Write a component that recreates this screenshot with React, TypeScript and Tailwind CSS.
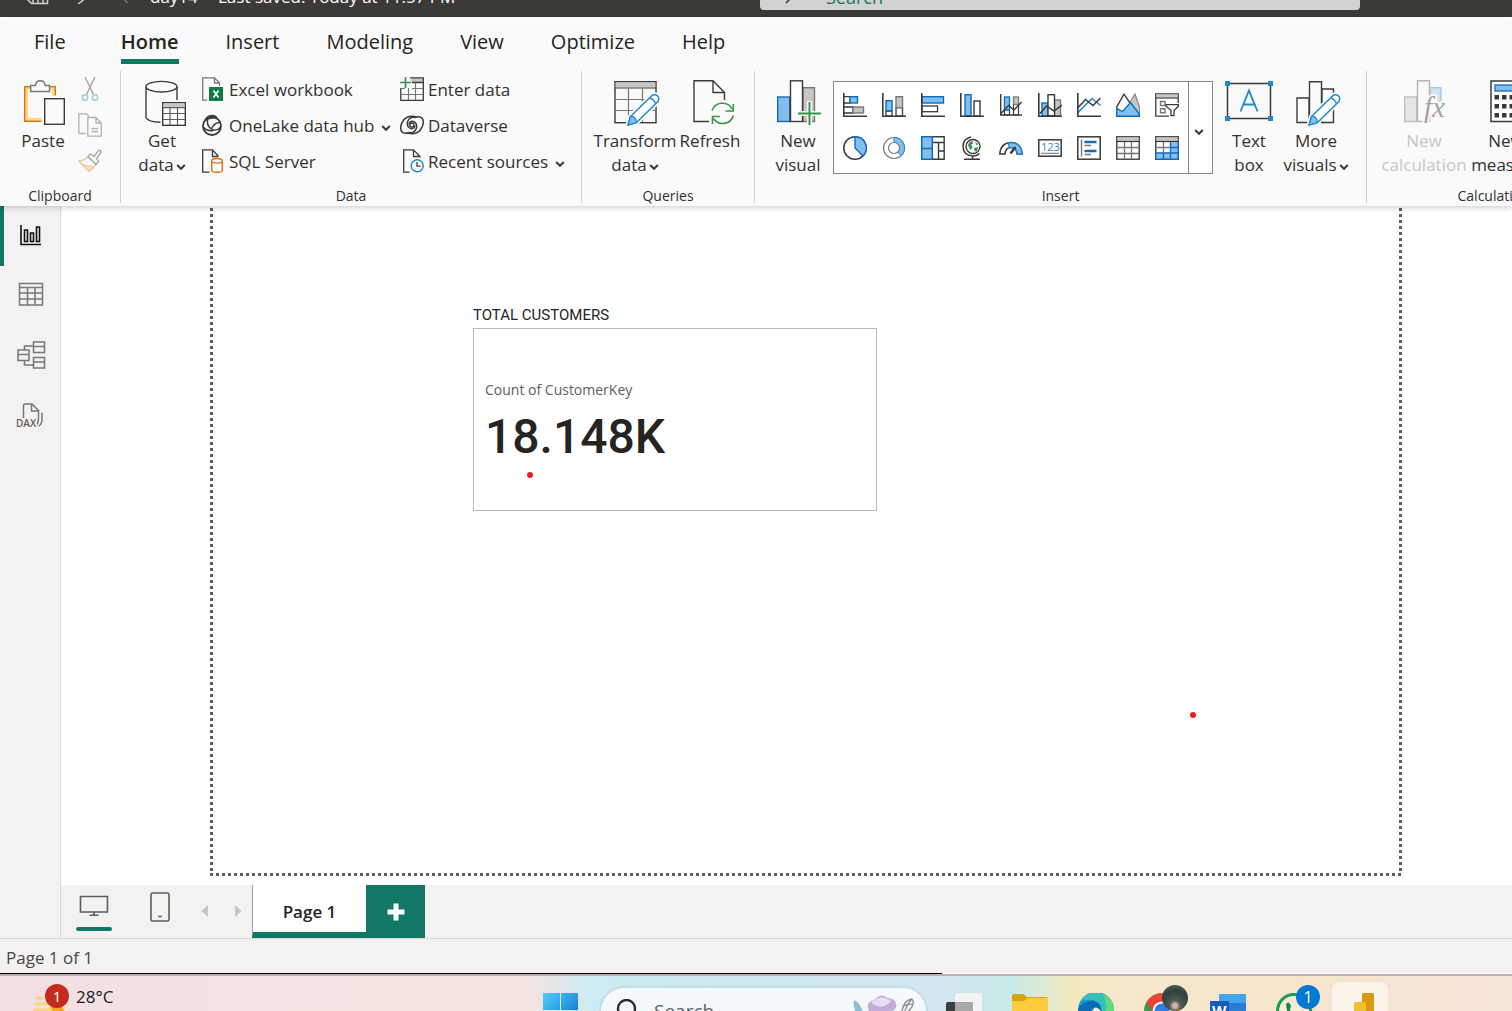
import type { ReactNode } from "react";

const INK = "#3b3a39";
const BLUE = "#83beec";
const EDGE = "#0f6cbd";
const GREY = "#c8c6c4";

type Drawing = { w: number; h: number; children: ReactNode; className?: string };

function Svg({ w, h, children, className }: Drawing) {
  return (
    <svg width={w} height={h} viewBox={`0 0 ${w} ${h}`} fill="none" aria-hidden="true" className={className ?? "shrink-0"}>
      {children}
    </svg>
  );
}

function Chevron({ className }: { className?: string }) {
  return (
    <Svg w={10} h={8} className={className ?? "shrink-0"}>
      <path d="M1.2 2 L5 5.8 L8.8 2" stroke={INK} strokeWidth="2" />
    </Svg>
  );
}

function Pencil() {
  return (
    <g>
      <path d="M17.5 36.5 L38.5 16 a4.2 4.2 0 0 1 6 6 L23.5 42.5 L15 45 Z" fill="#fff" stroke="#fafafa" strokeWidth="5" />
      <path d="M17.5 36.5 L38.5 16 a4.2 4.2 0 0 1 6 6 L23.5 42.5 L15 45 Z" fill="#fff" stroke="#1e8bcd" strokeWidth="1.5" strokeLinejoin="round" />
      <path d="M17.5 36.5 Q23 36 23.5 42.5 L15 45 Z" fill={BLUE} stroke="#1e8bcd" strokeWidth="1.3" />
      <path d="M36.5 18 Q41 19 42.5 24" stroke="#1e8bcd" strokeWidth="1.3" />
    </g>
  );
}

/* ---------- large ribbon icons ---------- */

const PasteIcon = () => (
  <Svg w={44} h={46} className="ml-1 shrink-0">
    <rect x="3.2" y="8.2" width="27.6" height="31.6" fill="#fafafa" stroke="#fbd98d" strokeWidth="4" />
    <rect x="1.7" y="6.7" width="30.6" height="34.6" stroke="#e0730d" strokeWidth="1.4" />
    <rect x="18.5" y="15.5" width="26" height="31" fill="#fafafa" />
    <path d="M7.7 11.5 V5.5 H12.5 Q13 .8 17.3 .8 Q21.500 .8 22 5.5 H26.500 V11.500 Z" fill="#fafafa" stroke="#797775" strokeWidth="1.4" />
    <rect x="21.7" y="18.7" width="19.600" height="25.600" fill="#fafafa" stroke={INK} strokeWidth="1.4" />
  </Svg>
);

const GetDataIcon = () => (
  <Svg w={44} h={46} className="ml-2 shrink-0">
    <path d="M2 7 V37.500 Q4 42 16.500 42.300 M33 7 V20" stroke={INK} strokeWidth="1.4" />
    <ellipse cx="17.5" cy="6.700" rx="15.500" ry="5.300" stroke={INK} strokeWidth="1.4" />
    <rect x="18.700" y="22.700" width="22.600" height="22.600" fill="#fff" stroke={INK} strokeWidth="1.4" />
    <rect x="19.400" y="23.400" width="21.200" height="3.600" fill={GREY} />
    <path d="M19 27.700 H41 M19 33.500 H41 M19 39.500 H41 M26 28 V45 M33.500 28 V45" stroke="#605e5c" strokeWidth="1.200" />
  </Svg>
);

const TransformIcon = () => (
  <Svg w={48} h={46} className="ml-1 shrink-0">
    <rect x="2" y="1.700" width="41" height="41" fill="#fafafa" stroke={INK} strokeWidth="1.400" />
    <rect x="2.700" y="2.400" width="39.600" height="5" fill={GREY} />
    <path d="M2 8 H43" stroke={INK} strokeWidth="1.200" />
    <path d="M2.700 19.500 H42 M2.700 30.500 H42 M15.500 8.500 V42 M29.500 8.500 V42" stroke="#797775" strokeWidth="1.200" />
    <Pencil />
  </Svg>
);

const RefreshIcon = () => (
  <Svg w={44} h={46} className="ml-[6px] shrink-0">
    <path d="M18 41.500 H3 V.8 H22 L33.500 12.500 V20 M22 .8 V12.500 H33.500" stroke={INK} strokeWidth="1.400" />
    <path d="M21 30.500 A11 11 0 0 1 41 29 M42.300 24 V31 H34.500 M42.300 35.500 A11 11 0 0 1 22.500 38.500 M21.500 44 V36.500 H29" stroke="#35964a" strokeWidth="1.600" />
  </Svg>
);

const NewVisualIcon = () => (
  <Svg w={46} h={46}>
    <rect x="2.700" y="17" width="12" height="24.500" fill={BLUE} stroke={EDGE} strokeWidth="1.400" />
    <rect x="28" y="7.700" width="11.500" height="33.800" fill={GREY} stroke="#797775" strokeWidth="1.400" />
    <rect x="15.500" y=".8" width="12" height="40.700" fill="#fff" stroke={INK} strokeWidth="1.400" />
    <path d="M34.500 21 V46 M22 33.500 H46" stroke="#fafafa" strokeWidth="5" />
    <path d="M34.500 22 V45 M23 33.500 H46" stroke="#35964a" strokeWidth="2" />
  </Svg>
);

const TextBoxIcon = () => (
  <Svg w={48} h={46}>
    <rect x="2.500" y="3.500" width="43" height="35" stroke={INK} strokeWidth="1.500" />
    <path d="M0 1h5v5H0z M43 1h5v5h-5z M0 36h5v5H0z M43 36h5v5h-5z" fill="#1e8bcd" />
    <path d="M15.500 31.500 L24 10.500 L32.500 31.500 M18.500 24.500 H29.500" stroke="#1e8bcd" strokeWidth="1.800" />
  </Svg>
);

const MoreVisualsIcon = () => (
  <Svg w={48} h={46} className="ml-1 shrink-0">
    <path d="M3 18 H15 V42.500 H3 Z M15.500 1.700 H27.500 V42.500 H15.500 Z M28 9 H39.500 V42.500 H28 Z" stroke={INK} strokeWidth="1.400" />
    <Pencil />
  </Svg>
);

const NewCalculationIcon = () => (
  <Svg w={44} h={46}>
    <rect x="2.700" y="17" width="12" height="24.500" fill="#e6e5e4" stroke="#c0bebc" strokeWidth="1.400" />
    <rect x="28" y="7.700" width="11" height="14" fill="#cbe3f6" stroke="#a3cbe9" strokeWidth="1.400" />
    <rect x="15.500" y=".8" width="12" height="40.700" fill="#fafafa" stroke="#b5b3b1" strokeWidth="1.400" />
    <text x="22" y="37" fontFamily="Liberation Serif, serif" fontStyle="italic" fontSize="29" stroke="#fafafa" strokeWidth="4">fx</text>
    <text x="22" y="37" fontFamily="Liberation Serif, serif" fontStyle="italic" fontSize="29" fill="#a6a4a2">fx</text>
  </Svg>
);

const NewMeasureIcon = () => (
  <Svg w={36} h={46} className="ml-1 shrink-0">
    <rect x="1" y="1" width="34" height="40.500" fill="#fff" stroke={INK} strokeWidth="1.500" />
    <rect x="5" y="5" width="26" height="6" fill={BLUE} stroke={EDGE} strokeWidth="1.300" />
    {[15, 24, 33].map((y) => (
      <path key={y} d={`M4.500 ${y}h4.500v4.500h-4.500z M12 ${y}h4.500v4.500h-4.500z M19.500 ${y}h4.500v4.500h-4.500z M27 ${y}h4.500v4.500h-4.500z`} fill={INK} />
    ))}
  </Svg>
);

/* ---------- small ribbon icons ---------- */

const CutIcon = () => (
  <Svg w={24} h={24}>
    <path d="M7 0 L15.500 17.500 M17 0 L8.500 17.500" stroke="#a19f9d" strokeWidth="1.300" />
    <circle cx="7" cy="20.500" r="2.700" stroke="#9ccbe6" strokeWidth="1.500" />
    <circle cx="17" cy="20.500" r="2.700" stroke="#9ccbe6" strokeWidth="1.500" />
  </Svg>
);

const CopyIcon = () => (
  <Svg w={24} h={24}>
    <path d="M8 20.500 H.8 V.8 H8.500 L11 3.500 M18 4.500 H9.800 V23.200 H23.300 V10 L18 4.500 V10 H23.300 M13.500 15.500 H20 M13.500 18.500 H20" stroke="#b3b1af" strokeWidth="1.300" />
  </Svg>
);

const BrushIcon = () => (
  <Svg w={24} h={24}>
    <path d="M1 12 Q7 11.500 10 7.500 L18 15.500 Q15 20 11 22.500 Z" fill="#fafafa" stroke="#efc49c" strokeWidth="1.300" />
    <path d="M5 16 L15.500 17.500 L11 22 Z" fill="#fbe3b4" stroke="#efc49c" strokeWidth="1" />
    <path d="M10 7.500 L12.500 5 L16 7.500 L20.500 1.500 Q22.500 .5 23.200 3 L18.500 9.500 L20.500 12.500 L18 15.500 Z" fill="#fafafa" stroke="#a8a6a4" strokeWidth="1.300" />
  </Svg>
);

const ExcelIcon = () => (
  <Svg w={24} h={24}>
    <path d="M6 23.200 H1.700 V.8 H13.500 L18.500 6 V9 M13.500 .8 V6 H18.500" stroke="#797775" strokeWidth="1.300" />
    <rect x="8" y="10" width="14" height="14" fill="#107c41" />
    <path d="M12.500 13.500 L17.500 20.500 M17.500 13.500 L12.500 20.500" stroke="#fff" strokeWidth="1.700" />
  </Svg>
);

const OneLakeIcon = () => (
  <Svg w={24} h={24}>
    <circle cx="11" cy="13" r="9" stroke={INK} strokeWidth="1.800" />
    <path d="M4 7.500 Q6 2.500 12 2.500 Q15 3 16 5 Q9 4 4 7.500 Z" fill={INK} stroke={INK} strokeWidth="1.500" strokeLinejoin="round" />
    <path d="M6.500 6.500 Q5.500 13 11 16.500 Q16 18.500 19.800 14 M10.500 15.500 Q14 9 19 9.500 M2.500 14.500 Q6 18.500 12 17.500" stroke={INK} strokeWidth="1.400" />
  </Svg>
);

const SqlIcon = () => (
  <Svg w={24} h={24}>
    <path d="M8.500 23.200 H1.700 V.8 H11.500 L17.500 7.500 M11.500 .8 V7.500 H17" stroke={INK} strokeWidth="1.300" />
    <path d="M10.700 12 V21.500 Q11 23.300 16 23.300 Q21 23.300 21.300 21.500 V12" fill="#fff" stroke="#e0730d" strokeWidth="1.500" />
    <ellipse cx="16" cy="11.800" rx="5.300" ry="2.300" fill="#fff" stroke="#e0730d" strokeWidth="1.400" />
  </Svg>
);

const EnterDataIcon = () => (
  <Svg w={24} h={24}>
    <rect x="11" y="1.500" width="12" height="3.500" fill={GREY} />
    <path d="M10 .8 H23.300 V23.300 H.8 V11 M12 5.500 H23" stroke={INK} strokeWidth="1.300" />
    <path d="M12 11.500 H23 M1 17.500 H23 M8.500 11 V23 M15.500 6 V23 M1 11.500 H5" stroke="#797775" strokeWidth="1.200" />
    <path d="M5.500 0 V11 M0 5.500 H11" stroke="#35964a" strokeWidth="1.700" />
  </Svg>
);

const DataverseIcon = () => (
  <Svg w={24} h={24}>
    <path d="M16.500 4.200 Q9 1.500 4 6.500 Q-1 13 1.500 18.500 Q4 21.500 9 19.500 Q14.500 20.500 16.500 15 Q17.500 9.500 12.500 8.300 Q9.500 8.300 9 11.500" stroke={INK} strokeWidth="1.500" />
    <path d="M7.500 19.800 Q15 22.500 20 17.500 Q25 11 22.500 5.500 Q20 2.500 15 4.500 Q9.500 3.500 7.500 9 Q6.500 14.500 11.500 15.700 Q14.500 15.700 15 12.500" stroke={INK} strokeWidth="1.500" />
    <circle cx="12" cy="12" r="2" stroke={INK} strokeWidth="1.400" />
  </Svg>
);

const RecentIcon = () => (
  <Svg w={24} h={24}>
    <path d="M9.500 23.200 H3.700 V.8 H13.500 L20 7.500 V8.500 M13.500 .8 V7.500 H19" stroke={INK} strokeWidth="1.300" />
    <circle cx="17.200" cy="16.800" r="6" fill="#fff" stroke="#1e8bcd" strokeWidth="1.500" />
    <path d="M17 13 V17.200 H20.500" stroke={INK} strokeWidth="1.300" />
  </Svg>
);

/* ---------- visual gallery ---------- */

const Axis = () => <path d="M.8 0 V23.200 H24" stroke={INK} strokeWidth="1.600" />;

const gallery: { name: string; art: ReactNode }[] = [
  {
    name: "Stacked bar chart",
    art: (
      <>
        <path d="M1 3.700 H7 V10 H1 M1 14 H10 V20 H1" fill="#fff" stroke={INK} strokeWidth="1.300" />
        <rect x="7" y="3.700" width="7.500" height="6.300" fill={BLUE} stroke={EDGE} strokeWidth="1.400" />
        <rect x="10" y="14" width="10.500" height="6" fill={GREY} stroke="#797775" strokeWidth="1.400" />
        <Axis />
      </>
    ),
  },
  {
    name: "Stacked column chart",
    art: (
      <>
        <path d="M4 18 H10 V23 H4 Z M14 14.500 H20.500 V23 H14 Z" fill="#fff" stroke={INK} strokeWidth="1.300" />
        <rect x="4" y="7.700" width="6" height="10" fill={BLUE} stroke={EDGE} strokeWidth="1.400" />
        <rect x="14" y="3.700" width="6.500" height="11" fill={GREY} stroke="#797775" strokeWidth="1.400" />
        <Axis />
      </>
    ),
  },
  {
    name: "Clustered bar chart",
    art: (
      <>
        <rect x="1" y="3.700" width="21.500" height="6.300" fill={BLUE} stroke={EDGE} strokeWidth="1.400" />
        <rect x="1" y="13" width="15.500" height="5.700" fill="#fff" stroke={INK} strokeWidth="1.300" />
        <Axis />
      </>
    ),
  },
  {
    name: "Clustered column chart",
    art: (
      <>
        <rect x="5" y="1.700" width="6" height="21" fill={BLUE} stroke={EDGE} strokeWidth="1.400" />
        <rect x="14" y="8" width="6" height="15" fill="#fff" stroke={INK} strokeWidth="1.400" />
        <Axis />
      </>
    ),
  },
  {
    name: "Line and stacked column chart",
    art: (
      <>
        <path d="M5.500 17 H10.500 V22 H5.500 Z M14.500 11 H19.500 V22 H14.500 Z" fill="#fff" stroke={INK} strokeWidth="1.200" />
        <rect x="5.500" y="4" width="5" height="13" fill={BLUE} stroke={EDGE} strokeWidth="1.300" />
        <rect x="14.500" y="4" width="5" height="7.500" fill={GREY} stroke="#797775" strokeWidth="1.300" />
        <path d="M1.700 1 V22 H23 M2 20.500 L9.500 12.500 L15 17 L22.500 9" stroke={INK} strokeWidth="1.400" />
      </>
    ),
  },
  {
    name: "Line and clustered column chart",
    art: (
      <>
        <rect x="4" y="10" width="6" height="13" fill={BLUE} stroke={EDGE} strokeWidth="1.400" />
        <rect x="16.500" y="7" width="6" height="16" fill={GREY} stroke="#797775" strokeWidth="1.300" />
        <rect x="10" y="1.700" width="6.500" height="21" fill="#fff" stroke={INK} strokeWidth="1.400" />
        <path d="M2 20.500 L8.500 13 L16 18 L24 12" stroke={INK} strokeWidth="1.500" />
        <Axis />
      </>
    ),
  },
  {
    name: "Line chart",
    art: (
      <>
        <path d="M1 19.500 L15 5.500 L23.500 12.500" stroke="#1e8bcd" strokeWidth="1.600" />
        <path d="M1 14.500 L8.500 6.500 L16 12.500 L23.500 5" stroke={INK} strokeWidth="1.500" />
        <Axis />
      </>
    ),
  },
  {
    name: "Area chart",
    art: (
      <>
        <path d="M11 14 L19 1 L23.500 14 V23 H11 Z" fill={GREY} stroke="#8a8886" strokeWidth="1.200" />
        <path d="M.7 23 V14 L8 1.200 L16 13 V23 Z" fill="#fff" stroke={INK} strokeWidth="1.400" />
        <path d="M.7 23.200 V15.500 L6.500 18.500 L14.500 9.500 L23.300 21 V23.200 Z" fill={BLUE} stroke={EDGE} strokeWidth="1.400" />
      </>
    ),
  },
  {
    name: "Slicer",
    art: (
      <>
        <path d="M14 23.200 H.8 V.8 H23.200 V10" stroke={INK} strokeWidth="1.300" />
        <rect x="1.500" y="1.500" width="21" height="3" fill={GREY} />
        <path d="M1 5 H23" stroke={INK} strokeWidth="1.200" />
        <path d="M5.500 8.500 H10 V12.500 H5.500 Z M5.500 15.700 H10 V19.700 H5.500 Z" stroke="#797775" strokeWidth="1.400" />
        <path d="M11 11.700 H23.500 V13 L19 17.500 V22.700 H16 V17.500 L11 13 Z" fill="#fff" stroke={INK} strokeWidth="1.300" />
      </>
    ),
  },
  {
    name: "Pie chart",
    art: (
      <>
        <circle cx="12" cy="12" r="11.200" stroke={INK} strokeWidth="1.500" />
        <path d="M12 .8 A11.200 11.200 0 0 1 20 20 L12 12 Z" fill={BLUE} stroke={EDGE} strokeWidth="1.400" />
      </>
    ),
  },
  {
    name: "Donut chart",
    art: (
      <>
        <circle cx="12" cy="12" r="10.500" stroke="#797775" strokeWidth="1.200" />
        <path d="M12 1.500 A10.500 10.500 0 0 1 19 19.800 L15.500 16 A5.500 5.500 0 0 0 12 6.500 Z" fill={BLUE} stroke="#1e8bcd" strokeWidth="1" />
        <circle cx="12" cy="12" r="5.500" fill="#fff" stroke="#797775" strokeWidth="1.200" />
      </>
    ),
  },
  {
    name: "Treemap",
    art: (
      <>
        <path d="M11.500 .8 H23.200 V23.200 H11.500 M11.500 6.500 H23 M17.500 6.500 V23 M17.500 15 H23" stroke={INK} strokeWidth="1.400" />
        <path d="M.8 .8 H11.300 V23.200 H.8 Z M.8 12.500 H11.300" fill={BLUE} stroke={EDGE} strokeWidth="1.500" />
      </>
    ),
  },
  {
    name: "Map",
    art: (
      <>
        <circle cx="13" cy="10.500" r="7" fill="#fff" stroke={INK} strokeWidth="1.400" />
        <path d="M8 9 Q9 5.500 12.500 5 L13 7.500 L11 8.500 L12.500 11 L10.500 14.500 Z M15 5.500 L18 8 L16.500 9.500 Z M14 12 L18.500 11 L16.500 15.500 L14.500 15 Z" fill="#35964a" />
        <path d="M11 1 Q3 3 3 10.500 Q3.500 19.500 12.500 20 Q17 20 19.500 17.500 M12.500 20 V23 M4 23.200 H20" stroke={INK} strokeWidth="1.500" />
      </>
    ),
  },
  {
    name: "Gauge",
    art: (
      <>
        <path d="M.8 18 Q1.500 7 12 6.500 Q22.500 7 23.200 18 H18 Q17.500 11.500 12 11.500 Q6.500 11.500 6 18 Z" fill="#fff" stroke={INK} strokeWidth="1.500" />
        <path d="M9 7 Q22 5 23.200 18 H18.500 Q18 11.500 10.500 11.500 Z" fill={BLUE} stroke="#1e8bcd" strokeWidth="1.300" />
        <path d="M11.500 17.500 L16.500 11" stroke={INK} strokeWidth="2.400" />
      </>
    ),
  },
  {
    name: "Card",
    art: (
      <>
        <rect x=".8" y="3.800" width="22.400" height="16.400" fill="#fff" stroke={INK} strokeWidth="1.500" />
        <text x="3" y="15" fontFamily="Open Sans, sans-serif" fontSize="11" fill="#1e8bcd">123</text>
        <path d="M3 17.300 H21" stroke="#797775" strokeWidth="1.100" />
      </>
    ),
  },
  {
    name: "Multi-row card",
    art: (
      <>
        <rect x=".8" y=".8" width="22.400" height="22.400" fill="#fff" stroke={INK} strokeWidth="1.500" />
        <path d="M4.500 3.500 V20.500 M7.500 9.500 H14 M7.500 18.500 H14" stroke="#797775" strokeWidth="1.400" />
        <path d="M7.500 6 H19.500 M7.500 15 H19.500" stroke={EDGE} strokeWidth="2.400" />
      </>
    ),
  },
  {
    name: "Table",
    art: (
      <>
        <rect x=".8" y=".8" width="22.400" height="22.400" fill="#fff" stroke={INK} strokeWidth="1.400" />
        <rect x="1.500" y="1.500" width="21" height="3.500" fill={GREY} />
        <path d="M1 5.500 H23" stroke={INK} strokeWidth="1.200" />
        <path d="M1.500 11.500 H22.500 M1.500 17.500 H22.500 M8.500 6 V22.500 M15.500 6 V22.500" stroke="#797775" strokeWidth="1.300" />
      </>
    ),
  },
  {
    name: "Matrix",
    art: (
      <>
        <rect x=".8" y=".8" width="22.400" height="22.400" fill="#fff" stroke={INK} strokeWidth="1.400" />
        <rect x="1.500" y="1.500" width="21" height="3.500" fill={GREY} />
        <path d="M1 5.500 H23" stroke={INK} strokeWidth="1.200" />
        <path d="M1.500 11.500 H15 M8.500 6 V17" stroke="#797775" strokeWidth="1.300" />
        <path d="M15.500 6 H23 V23 H1 V17 H15.500 Z" fill={BLUE} />
        <path d="M15.500 6 V23 M1 17 H23 M15.500 11.500 H23 M8.500 17 V23 M.8 17 V23.200 H23.200 V6" stroke={EDGE} strokeWidth="1.300" />
      </>
    ),
  },
];

/* ---------- ribbon pieces ---------- */

function Tall({ icon, lines, menu, width, muted }: { icon: ReactNode; lines: string[]; menu?: boolean; width: string; muted?: boolean }) {
  return (
    <button type="button" disabled={muted} className={`flex shrink-0 flex-col items-center gap-[3px] pt-[9px] ${width} ${muted ? "text-[#c8c6c4]" : ""}`}>
      {icon}
      <span className="flex flex-col items-center text-[17px] leading-6 whitespace-nowrap">
        {lines.map((line, i) => (
          <span key={line} className="flex items-center gap-[2px]">
            {line}
            {menu && i === lines.length - 1 && <Chevron className="mt-1 shrink-0" />}
          </span>
        ))}
      </span>
    </button>
  );
}

function Row({ icon, label, menu }: { icon: ReactNode; label: string; menu?: boolean }) {
  return (
    <button type="button" className="flex h-9 items-center text-[17px] whitespace-nowrap">
      {icon}
      <span className="ml-1 pt-[2px]">{label}</span>
      {menu && <Chevron className="mt-[6px] ml-[7px] shrink-0" />}
    </button>
  );
}

function Group({ label, width, last, children }: { label: string; width: string; last?: boolean; children: ReactNode }) {
  return (
    <section aria-label={label} className={`flex h-[132px] shrink-0 flex-col justify-between ${width} ${last ? "" : "border-r border-[#d2d0ce]"}`}>
      <div className="flex">{children}</div>
      <div className="text-center text-sm leading-[14px]">{label}</div>
    </section>
  );
}

const tabs = ["File", "Home", "Insert", "Modeling", "View", "Optimize", "Help"];

function Ribbon() {
  return (
    <header className="relative z-10 overflow-hidden bg-[#fafafa] shadow-[0_2px_6px_rgba(0,0,0,0.18)]">
      <nav className="flex h-[54px] gap-[47px] pl-[34px] text-[20px]">
        {tabs.map((t) => (
          <button
            key={t}
            type="button"
            className={`mt-2 h-[39px] pb-[1px] ${t === "Home" ? "ml-[8px] border-b-[5px] border-[#117865] font-semibold" : "border-b-[5px] border-transparent"}`}
          >
            {t}
          </button>
        ))}
      </nav>
      <div className="flex h-[135px] text-[#323130]">
        <Group label="Clipboard" width="w-[121px]">
          <Tall icon={<PasteIcon />} lines={["Paste"]} width="ml-2 w-[70px]" />
          <div className="flex flex-col">
            <button type="button" aria-label="Cut" className="flex h-9 items-center">
              <CutIcon />
            </button>
            <button type="button" aria-label="Copy" className="flex h-9 items-center">
              <CopyIcon />
            </button>
            <button type="button" aria-label="Format painter" className="flex h-9 items-center">
              <BrushIcon />
            </button>
          </div>
        </Group>
        <Group label="Data" width="w-[461px]">
          <Tall icon={<GetDataIcon />} lines={["Get", "data"]} menu width="mr-[3px] ml-[5px] w-[72px]" />
          <div className="flex w-[199px] flex-col items-start">
            <Row icon={<ExcelIcon />} label="Excel workbook" />
            <Row icon={<OneLakeIcon />} label="OneLake data hub" menu />
            <Row icon={<SqlIcon />} label="SQL Server" />
          </div>
          <div className="flex flex-col items-start">
            <Row icon={<EnterDataIcon />} label="Enter data" />
            <Row icon={<DataverseIcon />} label="Dataverse" />
            <Row icon={<RecentIcon />} label="Recent sources" menu />
          </div>
        </Group>
        <Group label="Queries" width="w-[173px]">
          <Tall icon={<TransformIcon />} lines={["Transform", "data"]} menu width="mr-[1px] ml-[13px] w-20" />
          <Tall icon={<RefreshIcon />} lines={["Refresh"]} width="w-[68px]" />
        </Group>
        <Group label="Insert" width="w-[612px]">
          <Tall icon={<NewVisualIcon />} lines={["New", "visual"]} width="ml-2 w-[70px]" />
          <div className="mt-[10px] flex h-[93px] w-[380px] border border-[#8a8886] bg-white">
            <div className="grid flex-1 grid-cols-9 grid-rows-2 px-[1px] pt-[1px] pb-[3px]">
              {gallery.map((g) => (
                <button key={g.name} type="button" aria-label={g.name} className="flex items-center justify-center">
                  <Svg w={24} h={24}>{g.art}</Svg>
                </button>
              ))}
            </div>
            <button type="button" aria-label="More gallery visuals" className="flex w-6 items-center justify-center border-l border-[#8a8886] pt-2 pr-[3px]">
              <Chevron />
            </button>
          </div>
          <Tall icon={<TextBoxIcon />} lines={["Text", "box"]} width="w-[72px]" />
          <Tall icon={<MoreVisualsIcon />} lines={["More", "visuals"]} menu width="w-[62px]" />
        </Group>
        <Group label="Calculations" width="w-[260px]" last>
          <Tall icon={<NewCalculationIcon />} lines={["New", "calculation"]} width="ml-2 w-[98px]" muted />
          <Tall icon={<NewMeasureIcon />} lines={["New", "measure"]} width="w-[66px]" />
        </Group>
      </div>
    </header>
  );
}

function TitleBar() {
  return (
    <div className="flex h-[17px] items-end overflow-hidden bg-[#3b3a37] text-[17px] text-white">
      <div className="flex h-[46px] w-full shrink-0 items-center">
        <button type="button" aria-label="Save" className="ml-[25px] w-6">
          <Svg w={24} h={22}>
            <path d="M2 1 H22.500 V20.500 H6.500 L2 16 Z M8 20.500 V13 H18 V20.500 M13 14 V20" stroke="#d2d0ce" strokeWidth="1.500" />
          </Svg>
        </button>
        <button type="button" aria-label="Undo" className="ml-6 w-5">
          <Svg w={20} h={20}>
            <path d="M3 6 H13 Q18 11 5 20" stroke="#d2d0ce" strokeWidth="1.500" />
          </Svg>
        </button>
        <button type="button" aria-label="Redo" className="ml-[26px] w-5">
          <Svg w={20} h={20}>
            <path d="M17 6 H7 Q-1 11 9 19" stroke="#797775" strokeWidth="1.500" />
          </Svg>
        </button>
        <span className="ml-[11px] w-[68px] pt-[6px]">day14</span>
        <span className="flex-1 pt-[6px] whitespace-nowrap">Last saved: Today at 11:57 PM</span>
        <label className="mr-[152px] flex h-8 w-[600px] items-center rounded-sm bg-[#d2d2d0] pl-6 text-[#117865]">
          <Svg w={16} h={20}>
            <circle cx="8" cy="7" r="6" stroke="#3b3a39" strokeWidth="1.500" />
            <path d="M8 13 L2 19" stroke="#3b3a39" strokeWidth="1.500" />
          </Svg>
          <input type="text" aria-label="Search commands" placeholder="Search" className="ml-[26px] flex-1 bg-transparent pt-[6px] text-[18px] outline-none placeholder:text-[#117865]" />
        </label>
      </div>
    </div>
  );
}

/* ---------- view switcher ---------- */

const views: { name: string; art: ReactNode }[] = [
  {
    name: "Report view",
    art: <path d="M5 4 V23.500 H25 M8.500 9 H11.500 V20.500 H8.500 Z M14.500 12 H17.500 V20.500 H14.500 Z M20.500 6 H23.500 V20.500 H20.500 Z" stroke="#111" strokeWidth="1.600" />,
  },
  {
    name: "Table view",
    art: <path d="M3.500 2.500 H26.500 V24 H3.500 Z M3.500 6.500 H26.500 M3.500 12 H26.500 M3.500 18 H26.500 M11.500 6.500 V24 M19 6.500 V24" stroke="#797775" strokeWidth="1.500" />,
  },
  {
    name: "Model view",
    art: <path d="M17.500 1 H28.500 V11.500 H17.500 Z M17.500 5.500 H28.500 M17.500 16.500 H28.500 V27 H17.500 Z M17.500 21 H28.500 M2 9 H13 V19.500 H2 Z M2 13.500 H13 M8.500 9 V5 H17.500 M8.500 19.500 V24 H17.500" stroke="#797775" strokeWidth="1.500" />,
  },
  {
    name: "DAX query view",
    art: (
      <>
        <path d="M7.500 17 V4.500 Q7.500 3 9 3 H16 L22.500 9.500 V17 Q22.500 21 21 23.500 M15.500 3.500 V10 H22 M26 11.500 V19 Q25.500 24 22.500 25" stroke="#797775" strokeWidth="1.500" />
        <text x="0" y="26" fontFamily="Open Sans, sans-serif" fontWeight="600" fontSize="10" fill="#605e5c">DAX</text>
      </>
    ),
  },
];

function ViewRail() {
  return (
    <nav aria-label="Views" className="flex w-[61px] shrink-0 flex-col border-r border-[#dcdad8] bg-[#f3f2f1]">
      {views.map((v, i) => (
        <button
          key={v.name}
          type="button"
          aria-label={v.name}
          className={`flex h-[60px] items-center border-l-4 pl-3 ${i === 0 ? "border-[#117865]" : "border-transparent"}`}
        >
          <Svg w={30} h={30}>{v.art}</Svg>
        </button>
      ))}
    </nav>
  );
}

const dotsDown = "w-[3px] shrink-0 bg-[repeating-linear-gradient(to_bottom,transparent_0_2px,#605e5c_2px_5px,transparent_5px_6px)]";

function Canvas() {
  return (
    <main className="flex flex-1 flex-col bg-white pr-[110px] pb-[9px] pl-[149px]">
      <div className="flex flex-1">
        <div className={dotsDown} />
        <div className="relative flex-1">
          <figure className="absolute top-[99px] left-[260px] w-[404px]">
            <figcaption className="h-[23px] font-['Roboto',sans-serif] text-[15px] leading-5 text-[#252423]">TOTAL CUSTOMERS</figcaption>
            <div className="h-[183px] border border-[#bdbbb9] px-[11px] pt-[49px]">
              <div className="text-[14px] leading-6 text-[#605e5c]">Count of CustomerKey</div>
              <div className="mt-[6px] font-['Roboto',sans-serif] text-[48px] leading-[58px] font-medium text-[#252423]">18.148K</div>
            </div>
          </figure>
          <i className="absolute top-[266px] left-[314px] size-[6px] rounded-full bg-[#e81e1e]" />
          <i className="absolute top-[506px] left-[977px] size-[6px] rounded-full bg-[#e81e1e]" />
        </div>
        <div className={dotsDown} />
      </div>
      <div className="h-[3px] bg-[repeating-linear-gradient(to_right,#605e5c_0_3px,transparent_3px_6px)]" />
    </main>
  );
}

function PageTabs() {
  return (
    <div className="flex h-[53px] bg-[#f3f2f1]">
      <button type="button" aria-label="Desktop layout" className="ml-[15px] flex w-9 flex-col items-center pt-[10px]">
        <Svg w={30} h={22}>
          <path d="M1.500 1.500 H28.500 V17 H1.500 Z M15 17 V20 M10.500 20.300 H19.500" stroke="#605e5c" strokeWidth="1.600" />
        </Svg>
        <span className="mt-[10px] h-1 w-9 rounded-full bg-[#117865]" />
      </button>
      <button type="button" aria-label="Mobile layout" className="ml-[37px] flex w-[22px] flex-col pt-[6px]">
        <Svg w={22} h={32}>
          <rect x="2" y="2" width="18" height="28" rx="1.500" stroke="#605e5c" strokeWidth="1.600" />
          <path d="M9 25.500 H13" stroke="#605e5c" strokeWidth="1.500" />
        </Svg>
      </button>
      <button type="button" aria-label="Previous page" className="ml-[29px] w-[10px]">
        <Svg w={10} h={14}>
          <path d="M8 0 L1.500 6 L8 12 Z" fill="#c8c6c4" />
        </Svg>
      </button>
      <button type="button" aria-label="Next page" className="ml-[23px] w-[10px]">
        <Svg w={10} h={14}>
          <path d="M2 0 L8.500 6 L2 12 Z" fill="#c8c6c4" />
        </Svg>
      </button>
      <button type="button" className="ml-[9px] w-[114px] border-b-[6px] border-l border-b-[#117865] border-l-[#a19f9d] bg-white pt-[7px] text-[17px] font-semibold text-[#252423]">
        Page 1
      </button>
      <button type="button" aria-label="New page" className="flex w-[59px] items-center justify-center bg-[#117865] pt-[1px]">
        <Svg w={18} h={18}>
          <path d="M9 .5 V17.500 M.5 9 H17.500" stroke="#fff" strokeWidth="5" />
        </Svg>
      </button>
    </div>
  );
}

/* ---------- desktop taskbar ---------- */

const apps: { name: string; art: ReactNode; badge?: string }[] = [
  {
    name: "Task view",
    art: (
      <>
        <rect x="9" y="0" width="27" height="27" rx="2" fill="#f4f4f4" />
        <rect x="0" y="9" width="27" height="26" rx="2" fill="#3c3c3c" />
        <rect x="9" y="9" width="18" height="18" fill="#a8a8a8" />
      </>
    ),
  },
  {
    name: "File Explorer",
    art: (
      <>
        <path d="M0 3 Q0 1 2 1 H11 L15 4 H34 Q36 4 36 6 V14 H0 Z" fill="#dfa00e" />
        <path d="M0 8 H12 L16 5 H36 V32 H0 Z" fill="#fdcb3e" />
      </>
    ),
  },
  {
    name: "Edge",
    art: (
      <>
        <circle cx="18" cy="17" r="18" fill="#159bd6" />
        <path d="M3 8 Q10 -3 22 0 Q35 4 36 18 H24 Q24 9 15 7 Q8 6 3 8 Z" fill="#35c1b8" />
        <path d="M24 1 Q36 5 36 18 H28 Q30 9 24 1 Z" fill="#5fdc73" />
        <path d="M0 16 Q5 7 15 8 Q24 10 23 18 H14 Q10 20 14 35 Q0 30 0 16 Z" fill="#0c6bb5" />
        <path d="M14 18 Q17 11 23 18 Z" fill="#e8f4ee" />
      </>
    ),
  },
  {
    name: "Chrome",
    art: (
      <>
        <circle cx="18" cy="18" r="18" fill="#fbbc05" />
        <path d="M2 10 Q8 0 18 0 Q29 0 34 10 H18 L10 22 Z" fill="#ea4335" />
        <path d="M2.500 9 L11 23 L18 36 Q0 34 0 18 Q0 13 2.500 9 Z" fill="#2f9a4c" />
        <circle cx="18" cy="18" r="9.500" fill="#fff" />
        <circle cx="18" cy="18" r="7.500" fill="#2f7de9" />
      </>
    ),
  },
  {
    name: "Word",
    art: (
      <>
        <rect x="9" y="1" width="27" height="33" rx="1" fill="#41a5ee" />
        <rect x="9" y="10" width="27" height="12" fill="#2b7cd3" />
        <rect x="0" y="8" width="19" height="20" rx="1" fill="#185abd" />
        <text x="2" y="23" fontFamily="Open Sans, sans-serif" fontWeight="700" fontSize="15" fill="#fff">W</text>
      </>
    ),
  },
  {
    name: "WhatsApp",
    badge: "1",
    art: (
      <>
        <circle cx="18" cy="18" r="16.500" fill="#f6ecd2" stroke="#1f9a58" strokeWidth="3" />
        <path d="M10 11 Q13 7 15 13 L14 17 Q16 22 22 24 L24 22 Q30 24 26 28 Q11 28 10 11 Z" fill="#1b8a4f" />
      </>
    ),
  },
];

function Taskbar() {
  return (
    <footer className="h-[35px] overflow-hidden bg-[linear-gradient(90deg,#f3dfe2_0%,#f4e3e2_18%,#f4e4e2_35%,#cdebf2_39%,#d2e6f0_62%,#c8eae8_67%,#f4e8bd_71%,#f6e7cd_74%,#f6e5cc_86%,#f7e4da_100%)]">
      <div className="flex h-[70px] items-center">
        <div className="flex h-full w-[540px] items-start pt-2 pl-[33px]">
          <div className="relative h-10 w-9 shrink-0">
            <Svg w={36} h={40}>
              <circle cx="23" cy="30" r="9" fill="#f5a623" />
              <path d="M4 14 H9 M3 20 H20 M-3 26 H18" stroke="#f8d77a" strokeWidth="3" strokeLinecap="round" />
            </Svg>
            <span className="absolute top-0 left-3 flex size-6 items-center justify-center rounded-full bg-[#c42b1c] text-[15px] text-white">1</span>
          </div>
          <span className="ml-[7px] text-[17px] leading-[26px] text-[#1b1b1b]">28°C</span>
        </div>
        <button type="button" aria-label="Start" className="flex w-[59px] pl-[3px]">
          <Svg w={36} h={36}>
            <defs>
              <linearGradient id="start" x1="0" y1="0" x2="1" y2="1">
                <stop offset="0" stopColor="#4fcdfa" />
                <stop offset="1" stopColor="#0669cc" />
              </linearGradient>
            </defs>
            <path d="M0 0 H17 V17 H0 Z M18 0 H35 V17 H18 Z M0 18 H17 V35 H0 Z M18 18 H35 V35 H18 Z" fill="url(#start)" />
          </Svg>
        </button>
        <label className="flex h-[50px] w-[329px] items-center rounded-full border-2 border-[#c5dde6] bg-[#f4f9fc] pl-[14px]">
          <Svg w={22} h={24}>
            <circle cx="11.500" cy="9.500" r="8.500" stroke="#2b2b2b" strokeWidth="2.400" />
            <path d="M5 16 L1 21" stroke="#2b2b2b" strokeWidth="2.400" />
          </Svg>
          <input type="text" aria-label="Search Windows" placeholder="Search" className="ml-[17px] w-[190px] bg-transparent text-[19px] outline-none placeholder:text-[#5d6266]" />
          <Svg w={66} h={40} className="ml-[6px] shrink-0">
            <path d="M4 9 Q10 11 14 24 L8 24 Q2 16 4 9 Z" fill="#8fbfd6" />
            <path d="M19 20 Q15 11 24 9 Q31 1 38 7 Q48 8 46 17 Q41 23 33 20 L31 30 H25 Z" fill="#c3addb" />
            <path d="M21 12 Q30 2 41 10 Q36 17 27 15 Z" fill="#eadcf2" />
            <path d="M52 20 Q54 9 62 8 Q66 14 57 21 M55 20 Q58 12 62 8 M53 20 L51 26 M54 15 Q59 12 63 14" stroke="#8a8d91" strokeWidth="1.300" />
          </Svg>
        </label>
        <div className="ml-[3px] flex items-center">
          {apps.map((a) => (
            <button key={a.name} type="button" aria-label={a.name} className="relative flex w-[66px] justify-center">
              <Svg w={36} h={36}>{a.art}</Svg>
              {a.name === "Chrome" && <i className="absolute -top-2 left-[33px] size-[26px] rounded-full bg-[radial-gradient(circle_at_50%_80%,#d9b3a5_0_8%,#4f5b54_22%,#2f403c_60%,#5b6a62_100%)]" />}
              {a.badge && (
                <span className="absolute -top-2 left-[35px] flex size-6 items-center justify-center rounded-full bg-[#0078d4] text-[16px] text-white">{a.badge}</span>
              )}
            </button>
          ))}
          <button type="button" aria-label="Power BI" className="ml-[4px] flex h-[60px] w-[58px] items-center justify-center rounded-lg border border-[#f3e3d2] bg-[#fcf3ea]">
            <Svg w={36} h={36}>
              <rect x="20" y="0" width="12" height="36" rx="1.500" fill="#d9980f" />
              <rect x="12" y="9" width="12" height="27" rx="1.500" fill="#eebf33" />
              <rect x="4" y="18" width="12" height="18" rx="1.500" fill="#f6d751" />
            </Svg>
          </button>
        </div>
      </div>
    </footer>
  );
}

export default function App() {
  return (
    <div className="flex min-h-screen flex-col overflow-hidden bg-white font-['Open_Sans',sans-serif] text-[#252423]">
      <TitleBar />
      <Ribbon />
      <div className="flex flex-1">
        <ViewRail />
        <div className="flex flex-1 flex-col">
          <Canvas />
          <PageTabs />
        </div>
      </div>
      <div className="h-[35px] border-t border-[#dcdad8] bg-[#f3f2f1] pl-[6px] text-[17px] leading-[38px] text-[#484644]">Page 1 of 1</div>
      <div className="h-px bg-white">
        <div className="h-px w-[62.3%] bg-black" />
      </div>
      <div className="h-[2px] bg-[#b9b4b2]" />
      <Taskbar />
    </div>
  );
}
